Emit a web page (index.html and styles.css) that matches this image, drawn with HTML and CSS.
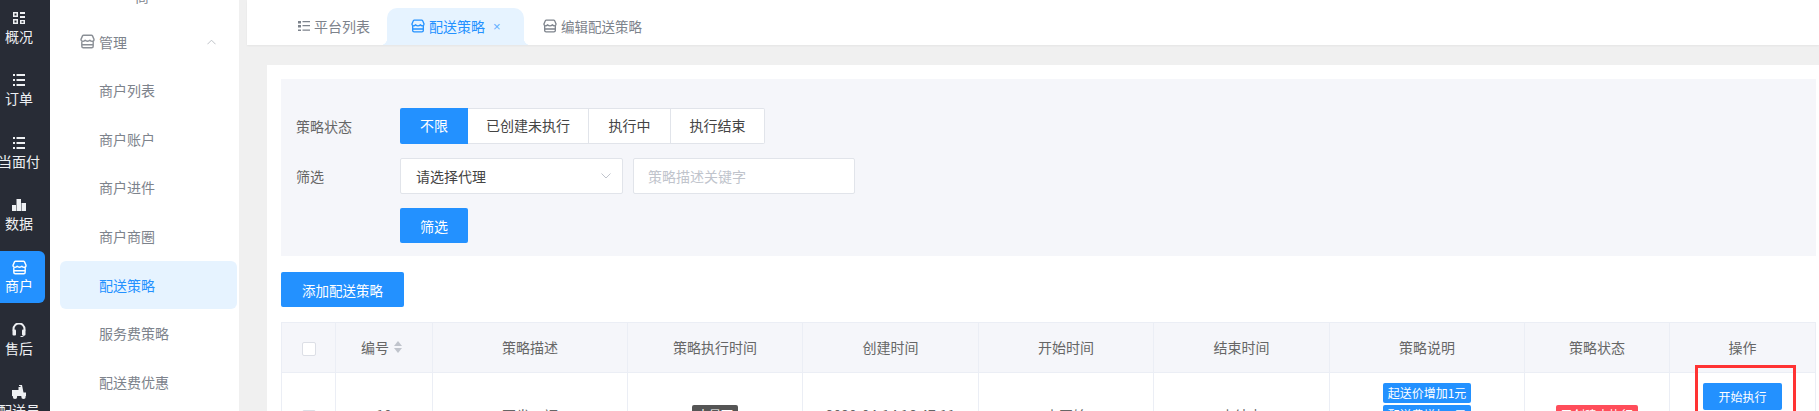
FILE: index.html
```html
<!DOCTYPE html>
<html lang="zh-CN">
<head>
<meta charset="utf-8">
<title>配送策略</title>
<link rel="stylesheet" href="styles.css">
</head>
<body>
<svg class="defs" width="0" height="0" aria-hidden="true">
  <symbol id="shop" viewBox="0 0 15 15">
    <path d="M3.6 1.2h7.800c.5 0 .9.300 1.100.7l1.500 3.500c0 1.100-.9 1.900-1.900 1.900-.9 0-1.600-.4-2.200-1.100-.5.700-1.400 1.100-2.400 1.100s-1.900-.4-2.400-1.100c-.6.700-1.300 1.100-2.200 1.100-1 0-1.900-.8-1.900-1.900L2.500 1.900c.2-.4.600-.7 1.100-.7z" fill="none" stroke="currentColor" stroke-width="1.400" stroke-linejoin="round"/>
    <path d="M1.800 7.500v4.800c0 .9.700 1.500 1.500 1.500h8.400c.8 0 1.500-.6 1.500-1.500V7.500M2 10.700h11" fill="none" stroke="currentColor" stroke-width="1.400"/>
  </symbol>
</svg>
<div class="app">
  <nav class="rail">
    <a class="rail-item">
      <svg class="rail-icon" viewBox="0 0 14 14"><path d="M1 1h5v5H1zM8 1h5v2H8zM8 5h5v2H8zM1 8h5v5H1zM8 9h5v4H8z" fill="currentColor"/><path d="M2.500 2.500h2v2h-2zM2.500 9.500h2v2h-2zM9.500 10.300h2v1.400h-2z" fill="#282c36"/></svg>
      <span>概况</span>
    </a>
    <a class="rail-item">
      <svg class="rail-icon" viewBox="0 0 14 14"><path d="M1 1h2v2H1zM4.500 1H13v2H4.500zM1 6h2v2H1zM4.500 6H13v2H4.500zM1 11h2v2H1zM4.500 11H13v2H4.500z" fill="currentColor"/></svg>
      <span>订单</span>
    </a>
    <a class="rail-item">
      <svg class="rail-icon" viewBox="0 0 14 14"><path d="M1 1h2v2H1zM4.500 1H13v2H4.500zM1 6h2v2H1zM4.500 6H13v2H4.500zM1 11h2v2H1zM4.500 11H13v2H4.500z" fill="currentColor"/></svg>
      <span>当面付</span>
    </a>
    <a class="rail-item">
      <svg class="rail-icon" viewBox="0 0 14 14"><path d="M0 7h4v6H0zM4.500 1h4.500v12H4.500zM9.500 5H14v8H9.500z" fill="currentColor"/></svg>
      <span>数据</span>
    </a>
    <a class="rail-item is-active">
      <svg class="rail-icon rail-icon-shop"><use href="#shop"/></svg>
      <span>商户</span>
    </a>
    <a class="rail-item">
      <svg class="rail-icon" viewBox="0 0 14 14"><path d="M1.500 7.500V6a5.500 5.500 0 0 1 11 0v1.500" fill="none" stroke="currentColor" stroke-width="2"/><rect x=".5" y="6.500" width="3.500" height="6" rx="1" fill="currentColor"/><rect x="10" y="6.500" width="3.500" height="6" rx="1" fill="currentColor"/><path d="M12 12c0 1.200-1.200 1.600-3.500 1.600" fill="none" stroke="currentColor"/></svg>
      <span>售后</span>
    </a>
    <a class="rail-item">
      <svg class="rail-icon" viewBox="0 0 14 14"><path d="M7 0h3l1.500 7.500H14V11H0V5h6.500V2h2V1H7z" fill="currentColor"/><circle cx="3" cy="11.800" r="2.200" fill="currentColor"/><circle cx="11.500" cy="11.800" r="2.200" fill="currentColor"/></svg>
      <span>配送员</span>
    </a>
  </nav>

  <aside class="submenu">
    <div class="sub-clipped">商</div>
    <div class="sub-group">
      <svg class="sub-icon"><use href="#shop"/></svg>
      <span class="sub-group-name">管理</span>
      <svg class="sub-arrow" viewBox="0 0 10 6"><path d="M.5 5.500L5 1l4.500 4.500" fill="none" stroke="currentColor"/></svg>
    </div>
    <a class="sub-item">商户列表</a>
    <a class="sub-item">商户账户</a>
    <a class="sub-item">商户进件</a>
    <a class="sub-item">商户商圈</a>
    <a class="sub-item is-active">配送策略</a>
    <a class="sub-item">服务费策略</a>
    <a class="sub-item">配送费优惠</a>
  </aside>

  <main class="main">
    <header class="tabs">
      <a class="tab tab-first">
        <svg class="tab-icon" viewBox="0 0 12 12"><path d="M0 1h3v2.500H0zM4.500 1H12v1.200H4.500zM0 5h3v2.500H0zM4.500 5H12v1.200H4.500zM0 9.500h3V11H0zM4.500 9.500H12v1.200H4.500z" fill="currentColor"/></svg>
        平台列表
      </a>
      <a class="tab is-active">
        <svg class="tab-icon tab-icon-shop"><use href="#shop"/></svg>
        配送策略
        <span class="tab-close">×</span>
      </a>
      <a class="tab tab-last">
        <svg class="tab-icon tab-icon-shop"><use href="#shop"/></svg>
        编辑配送策略
      </a>
    </header>

    <div class="content">
      <section class="card">
        <form class="filters">
          <div class="filter-row">
            <label class="filter-label">策略状态</label>
            <div class="segments">
              <button type="button" class="seg seg-all is-active">不限</button>
              <button type="button" class="seg seg-created">已创建未执行</button>
              <button type="button" class="seg seg-running">执行中</button>
              <button type="button" class="seg seg-ended">执行结束</button>
            </div>
          </div>
          <div class="filter-row">
            <label class="filter-label">筛选</label>
            <div class="select">
              <span>请选择代理</span>
              <svg class="select-arrow" viewBox="0 0 10 6"><path d="M.5.500L5 5l4.500-4.500" fill="none" stroke="currentColor"/></svg>
            </div>
            <div class="input">策略描述关键字</div>
          </div>
          <div class="filter-row filter-row-last">
            <span class="filter-label"></span>
            <button type="button" class="btn btn-filter">筛选</button>
          </div>
        </form>

        <button type="button" class="btn btn-add">添加配送策略</button>

        <table class="grid">
          <colgroup>
            <col class="c-check"><col class="c-id"><col class="c-desc"><col class="c-time"><col class="c-time2"><col class="c-time"><col class="c-time2"><col class="c-desc"><col class="c-state"><col class="c-op">
          </colgroup>
          <thead>
            <tr>
              <th><span class="checkbox"></span></th>
              <th><span class="sort-head">编号<span class="carets"><i class="caret-up"></i><i class="caret-down"></i></span></span></th>
              <th>策略描述</th>
              <th>策略执行时间</th>
              <th>创建时间</th>
              <th>开始时间</th>
              <th>结束时间</th>
              <th>策略说明</th>
              <th>策略状态</th>
              <th>操作</th>
            </tr>
          </thead>
          <tbody>
            <tr>
              <td><span class="checkbox"></span></td>
              <td>10</td>
              <td>要发五福</td>
              <td><span class="tag tag-dark">大暴雨</span></td>
              <td>2020-04-14 16:47:11</td>
              <td>未开始</td>
              <td>未结束</td>
              <td>
                <span class="tag tag-blue">起送价增加1元</span>
                <span class="tag tag-blue">配送费增加1元</span>
                <span class="tag tag-blue">服务费增加1元</span>
              </td>
              <td><span class="tag tag-red">已创建未执行</span></td>
              <td class="op-cell">
                <div class="op-mark"></div>
                <button type="button" class="btn btn-op">开始执行</button>
                <button type="button" class="btn btn-op">编辑</button>
              </td>
            </tr>
          </tbody>
        </table>
      </section>
    </div>
  </main>
</div>
</body>
</html>
```
FILE: styles.css
```css
* { box-sizing: border-box; }
html, body { margin: 0; height: 100%; overflow: hidden; }
body {
  font-family: "Noto Sans CJK SC", "Noto Sans", sans-serif;
  font-size: 14px;
  color: #666;
  background: #f0f0f0;
}
.defs { position: absolute; }
.app { display: flex; height: 411px; overflow: hidden; }

/* icon rail */
.rail {
  flex: 0 0 50px;
  display: flex;
  flex-direction: column;
  gap: 10.33px;
  padding-top: 2px;
  background: #282c36;
  color: #eef0f3;
}
.rail-item {
  flex: 0 0 52px;
  width: 45px;
  padding: 9px 7px 0 0;
  display: flex;
  flex-direction: column;
  align-items: center;
  line-height: 20px;
  white-space: nowrap;
  border-radius: 0 6px 6px 0;
}
.rail-item.is-active { background: #2391ff; color: #fff; }
.rail-icon { width: 14px; height: 14px; flex: none; margin-bottom: 1px; }
.rail-icon-shop { width: 15px; height: 15px; margin-bottom: 0; }

/* sub menu */
.submenu {
  flex: 0 0 189px;
  background: #fff;
  color: #7d838c;
  overflow: hidden;
}
.sub-clipped {
  height: 10px;
  margin-top: -9px;
  padding-left: 85px;
  line-height: 10px;
}
.sub-group {
  display: flex;
  align-items: center;
  height: 49px;
  margin-top: 16px;
  padding: 0 23px 0 30px;
}
.sub-icon { width: 15px; height: 15px; margin-right: 4px; color: #8a8f96; flex: none; }
.sub-group-name { flex: 1; }
.sub-arrow { width: 9px; height: 6px; color: #b8bcc2; }
.sub-item {
  display: block;
  height: 48px;
  margin: 0 2px 0.67px 10px;
  padding-left: 39px;
  line-height: 49px;
  border-radius: 6px;
}
.sub-item.is-active { background: #e6f3ff; color: #2391ff; }

/* main column */
.main { flex: 1; min-width: 0; padding-left: 8px; display: flex; flex-direction: column; }
.tabs {
  flex: 0 0 45px;
  display: flex;
  align-items: flex-end;
  background: #fff;
  color: #7d838c;
  box-shadow: 0 1px 2px rgba(0, 0, 0, .05);
  position: relative;
}
.tab {
  display: flex;
  align-items: center;
  height: 37px;
  padding-bottom: 2px;
  white-space: nowrap;
}
.tab-first { width: 140px; padding-left: 51px; }
.tab.is-active {
  width: 137px;
  padding-left: 24px;
  background: #e6f3ff;
  color: #2391ff;
  border-radius: 10px 10px 0 0;
  position: relative;
}
.tab.is-active::before, .tab.is-active::after {
  content: "";
  position: absolute;
  bottom: 0;
  width: 7px;
  height: 7px;
}
.tab.is-active::before { left: -7px; background: radial-gradient(circle at 0 0, transparent 7px, #e6f3ff 7.500px); }
.tab.is-active::after { right: -7px; background: radial-gradient(circle at 100% 0, transparent 7px, #e6f3ff 7.500px); }
.tab-last { padding-left: 19px; font-size: 13.500px; }
.tab-icon { width: 12px; height: 12px; margin-right: 4px; flex: none; }
.tab-icon-shop { width: 14px; height: 14px; }
.tab-close {
  margin: 2px 0 0 8px;
  font-family: "Liberation Sans", sans-serif;
  font-size: 13px;
  opacity: .7;
}

.content { flex: 1; min-height: 0; padding: 20px 0 0 20px; }
.card {
  height: 100%;
  padding: 14px 3px 0 14px;
  background: #fff;
}

/* filters */
.filters { padding: 29px 0 13px 15px; background: #f5f6fa; }
.filter-row { display: flex; align-items: center; height: 36px; margin-bottom: 14px; }
.filter-row-last { margin-bottom: 0; height: 35px; }
.filter-label { flex: 0 0 104px; padding-bottom: 1px; }
.segments { display: flex; }
.seg {
  height: 36px;
  padding: 0 0 2px;
  font: inherit;
  color: #444;
  background: #fff;
  border: 1px solid #e1e4ea;
  border-left: 0;
  cursor: pointer;
}
.seg-all { width: 68px; border: 0; border-radius: 2px 0 0 2px; }
.seg-created { width: 121px; }
.seg-running { width: 82px; }
.seg-ended { width: 94px; border-radius: 0 2px 2px 0; }
.seg.is-active { background: #2391ff; color: #fff; }
.select, .input {
  display: flex;
  align-items: center;
  height: 36px;
  padding-bottom: 1px;
  background: #fff;
  border: 1px solid #e1e4ea;
  border-radius: 2px;
}
.select {
  width: 223px;
  padding-left: 15px;
  padding-right: 11px;
  justify-content: space-between;
  color: #444;
}
.select-arrow { width: 10px; height: 6px; color: #c0c4cc; }
.input { width: 222px; margin-left: 10px; padding-left: 14px; color: #c0c4cc; }

.btn {
  padding: 0;
  font: inherit;
  color: #fff;
  background: #2391ff;
  border: 0;
  border-radius: 2px;
  cursor: pointer;
}
.btn-filter { width: 68px; height: 35px; }
.btn-add { display: block; width: 123px; height: 35px; margin-top: 16px; font-size: 13.500px; }

/* table */
.grid {
  width: 1534px;
  margin-top: 15px;
  table-layout: fixed;
  border-collapse: collapse;
}
.c-check { width: 54px; }
.c-id { width: 97px; }
.c-desc { width: 195px; }
.c-time { width: 175px; }
.c-time2 { width: 176px; }
.c-state { width: 145px; }
.c-op { width: 146px; }
.grid th, .grid td {
  padding: 0;
  text-align: center;
  vertical-align: middle;
  border: 1px solid #ebeef5;
}
.grid th { height: 50px; padding-bottom: 2px; background: #f5f6fa; font-weight: 400; }
.grid td { height: 84px; }
.checkbox {
  display: inline-block;
  width: 14px;
  height: 14px;
  vertical-align: middle;
  background: #fff;
  border: 1px solid #dcdfe6;
  border-radius: 2px;
}
.sort-head { display: inline-flex; align-items: center; gap: 5px; margin-right: 5px; }
.carets { display: inline-flex; flex-direction: column; gap: 2px; }
.carets i { display: block; width: 0; height: 0; border-left: 4.500px solid transparent; border-right: 4.500px solid transparent; }
.carets .caret-up { border-bottom: 5px solid #c0c4cc; }
.carets .caret-down { border-top: 5px solid #c0c4cc; }

.tag {
  display: block;
  width: max-content;
  height: 20px;
  margin: 0 auto 2px;
  padding: 0 5px;
  font-size: 12px;
  line-height: 19px;
  color: #fff;
  border-radius: 2px;
}
.tag:last-child { margin-bottom: 0; }
.tag-dark { background: #555; }
.tag-blue { background: #2391ff; }
.tag-red { background: #ff4d5a; }

.op-cell { position: relative; }
.op-mark {
  position: absolute;
  left: 25px;
  top: -8px;
  width: 101px;
  height: 110px;
  border: 3px solid #f33;
  pointer-events: none;
}
.btn-op { display: block; width: 79px; height: 27px; margin: 0 auto 5px; font-size: 12px; }
```
